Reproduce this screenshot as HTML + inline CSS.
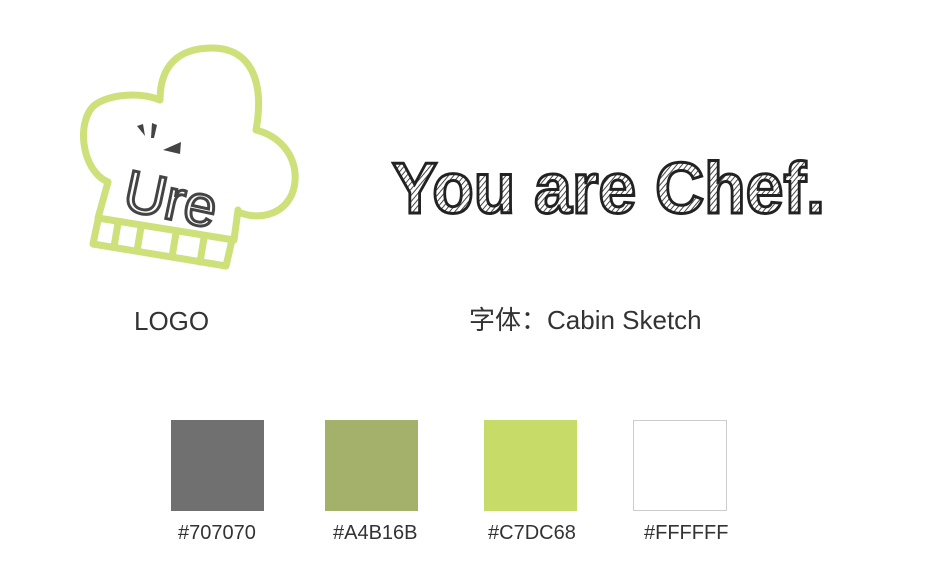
<!DOCTYPE html>
<html><head><meta charset="utf-8"><style>
html,body{margin:0;padding:0;background:#fff;}
body{width:942px;height:587px;position:relative;overflow:hidden;font-family:"Liberation Sans","Noto Sans CJK SC",sans-serif;color:#222;}
.t{position:absolute;font-size:26px;line-height:1;color:#333;}
.sw{position:absolute;top:420px;width:93px;height:91px;}
.lb{position:absolute;top:522px;font-size:20px;color:#333;}
</style></head><body>
<svg width="942" height="587" style="position:absolute;left:0;top:0">
<defs>
<pattern id="h" width="4" height="4" patternUnits="userSpaceOnUse" patternTransform="rotate(40)">
<rect width="4" height="4" fill="#fff"/><line x1="0" y1="0" x2="0" y2="4" stroke="#333" stroke-width="1.8"/>
</pattern>
</defs>
<g fill="none" stroke="#cde07a" stroke-width="7" stroke-linejoin="round" stroke-linecap="round">
<path d="M108,182 C80,170 76,118 96,104 C112,94 140,92 160,100 C160,66 178,48 212,48 C250,48 265,80 256,130 C288,138 302,168 292,194 C282,216 258,220 238,212"/>
<path d="M108,182 L98,218 L234,240 L238,210"/>
<path d="M98,220 L93,244 L226,266 L232,240"/>
<path d="M118,223 L114,247 M141,227 L137,251 M176,233 L172,257 M204,238 L200,262"/>
</g>
<path d="M137,126 l6,-2 l2,12 z M152,123 l5,2 l-3,13 l-3,0 z M163,150 l18,-8 l-1,12 z" fill="#444"/>
<text x="124" y="220" font-family="Liberation Sans" font-size="58" fill="#fff" stroke="#444" stroke-width="3" transform="rotate(12 175 200)">Ure</text>
<text x="392" y="213" font-family="Liberation Sans" font-weight="bold" font-size="72" textLength="433" lengthAdjust="spacingAndGlyphs" fill="url(#h)" stroke="#222" stroke-width="3">You are Chef.</text>
</svg>
<div class="t" style="left:134px;top:308px;">LOGO</div>
<div class="t" style="left:469px;top:307px;">字体：Cabin Sketch</div>
<div class="sw" style="left:171px;background:#707070"></div>
<div class="sw" style="left:325px;background:#A4B16B"></div>
<div class="sw" style="left:484px;background:#C7DC68"></div>
<div class="sw" style="left:633px;background:#fff;border:1px solid #ccc;width:92px;height:89px"></div>
<div class="lb" style="left:178px">#707070</div>
<div class="lb" style="left:333px">#A4B16B</div>
<div class="lb" style="left:488px">#C7DC68</div>
<div class="lb" style="left:644px">#FFFFFF</div>
</body></html>
